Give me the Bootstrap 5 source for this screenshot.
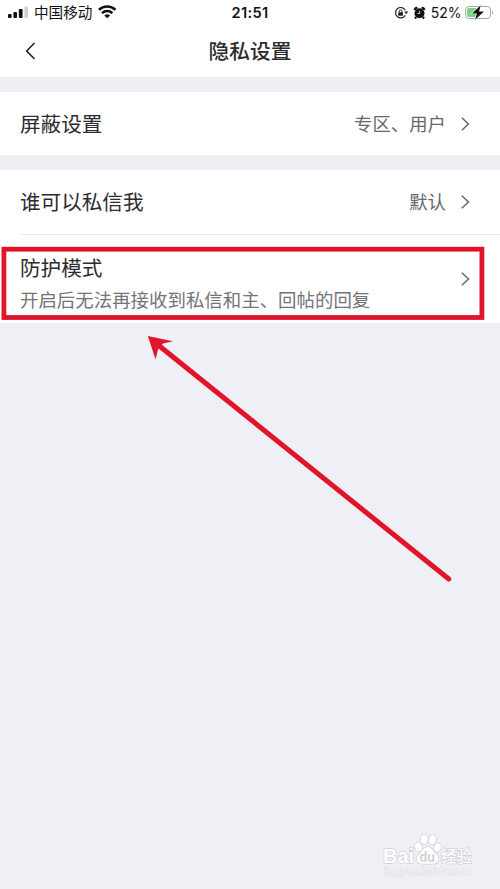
<!DOCTYPE html>
<html lang="zh-CN">
<head>
<meta charset="utf-8">
<meta name="viewport" content="width=device-width, initial-scale=1">
<title>隐私设置</title>
<link href="https://cdn.jsdelivr.net/npm/bootstrap@5.3.0/dist/css/bootstrap.min.css" rel="stylesheet">
<style>
body{font-family:"Liberation Sans","Noto Sans CJK SC",sans-serif;background:#eff0f5;color:#2c2b2f;height:889px;overflow:hidden}
svg{display:block;flex-shrink:0}
.status-strip{height:26px;color:#111}
.carrier{font-size:14.6px;line-height:27px}
.clock{font-family:Inter,"Liberation Sans",sans-serif;font-size:14.6px;font-weight:600;line-height:26px;left:200px;width:100px;letter-spacing:.3px}
.battery-text{font-family:Inter,"Liberation Sans",sans-serif;font-size:14px;line-height:26px}
.title-strip{height:51px}
.page-title{font-size:20.7px;font-weight:500;line-height:52px}
.gap-band{height:15px;background:#efeef3}
.cell{padding-left:20px;padding-right:30px}
.cell-a{height:63px}
.cell-b{height:64px}
.cell-c{height:88px}
.cell-label{font-size:20.6px;line-height:28px;padding-top:2px}
.cell-value{font-size:18.4px;line-height:28px;padding-top:2px;color:#68676b}
.rule{height:1px;margin-left:20px;background:#eaeaec}
.note-stack{padding-top:8px;gap:5px}
.cell-note{font-size:18.45px;line-height:26px;color:#747377}
.overlay{left:0;top:0;pointer-events:none}
</style>
<script src="https://cdn.jsdelivr.net/npm/bootstrap@5.3.0/dist/js/bootstrap.bundle.min.js"></script>
</head>
<body class="position-relative">
<header class="bg-white">
  <div class="status-strip position-relative d-flex align-items-center justify-content-between">
    <div class="d-flex align-items-center">
      <svg width="34" height="26" viewBox="0 0 34 26"><g fill="#111"><rect x="8" y="14" width="3.6" height="4" rx="1"/><rect x="13.4" y="12" width="3.6" height="6" rx="1"/><rect x="18.8" y="9" width="3.8" height="9" rx="1"/></g><rect x="24.4" y="6.5" width="3.6" height="11.5" rx="1" fill="#d2d2d4"/></svg>
      <span class="carrier">中国移动</span>
      <svg width="32" height="26" viewBox="92 0 32 26"><g fill="none" stroke="#111" stroke-width="2.5"><path d="M98.9 9.8a12 12 0 0 1 16.6 0"/><path d="M102 13.1a7.6 7.6 0 0 1 10.4 0"/></g><path d="M104.3 15.5a4.5 4.5 0 0 1 5.8 0l-2.9 2.8z" fill="#111"/></svg>
    </div>
    <span class="clock position-absolute text-center">21:51</span>
    <div class="d-flex align-items-center">
      <svg width="37" height="26" viewBox="393.5 0 37 26"><path d="M404.8 10.2a5.200 5.200 0 1 0 0 5" fill="none" stroke="#222" stroke-width="1.2"/><path d="M403.7 11.4h4l-2 2.8z" fill="#222"/><rect x="397.700" y="12.2" width="4.800" height="3.500" rx=".6" fill="#222"/><path d="M398.700 12.5v-1.200a1.400 1.400 0 0 1 2.800 0v1.200" fill="none" stroke="#222"/><circle cx="419" cy="13.3" r="5" fill="#111"/><path d="M414.300 10.200a2 2 0 0 1 2.500-2.200M423.700 10.200a2 2 0 0 0-2.500-2.200M415.6 17l-1.1 1.500M422.4 17l1.1 1.500" fill="none" stroke="#111" stroke-width="2.200"/><path d="M419.2 10.8v2.700h-2.300" fill="none" stroke="#fff" stroke-width=".8"/></svg>
      <span class="battery-text">52%</span>
      <svg width="38.5" height="26" viewBox="461.5 0 38.5 26"><rect x="465" y="6.500" width="25" height="12" rx="3.400" fill="#fff" stroke="#a5a5a7"/><path d="M468.500 8h10v9h-10a2 2 0 0 1-2-2v-5a2 2 0 0 1 2-2z" fill="#78d37e"/><path d="M491.700 10.400q2.200 2.100 0 4.200z" fill="#a5a5a7"/><path d="M480.300 5.300l-8.800 8.200h5l-2 6.300 9-8.400h-5z" fill="#111" stroke="#fff" stroke-width="1.200" paint-order="stroke"/></svg>
    </div>
  </div>
  <div class="title-strip position-relative text-center">
    <svg class="position-absolute overlay" width="50" height="51" viewBox="0 26 50 51"><path d="M34.500 43l-7.800 8 7.800 8" fill="none" stroke="#222" stroke-width="1.600"/></svg>
    <h1 class="page-title m-0">隐私设置</h1>
  </div>
</header>
<div class="gap-band"></div>
<main>
  <section class="bg-white">
    <div class="cell cell-a d-flex align-items-center justify-content-between">
      <span class="cell-label">屏蔽设置</span>
      <div class="d-flex align-items-center"><span class="cell-value">专区、用户</span><svg width="24" height="18" viewBox="0 0 24 18"><path d="M15.800 2.800l6.700 6.200-6.700 6.200" fill="none" stroke="#68676b" stroke-width="1.500"/></svg></div>
    </div>
  </section>
  <div class="gap-band"></div>
  <section class="bg-white">
    <div class="cell cell-b d-flex align-items-center justify-content-between">
      <span class="cell-label">谁可以私信我</span>
      <div class="d-flex align-items-center"><span class="cell-value">默认</span><svg width="24" height="18" viewBox="0 0 24 18"><path d="M15.800 2.800l6.700 6.200-6.700 6.200" fill="none" stroke="#68676b" stroke-width="1.500"/></svg></div>
    </div>
    <div class="rule"></div>
    <div class="cell cell-c d-flex align-items-center justify-content-between">
      <div class="note-stack d-flex flex-column">
        <span class="cell-label">防护模式</span>
        <span class="cell-note text-nowrap">开启后无法再接收到私信和主、回帖的回复</span>
      </div>
      <svg width="24" height="18" viewBox="0 0 24 18"><path d="M15.800 2.800l6.700 6.200-6.700 6.200" fill="none" stroke="#68676b" stroke-width="1.500"/></svg>
    </div>
  </section>
</main>
<svg class="position-absolute overlay" width="500" height="889" viewBox="0 0 500 889">
  <rect x="3.9" y="249.200" width="478" height="68.300" fill="none" stroke="#e0142b" stroke-width="4.800"/>
  <path d="M160 346.500L448.800 579" stroke="#e0142b" stroke-width="5" stroke-linecap="round"/>
  <path d="M147.800 336L173 341.200L163 343.500L158 349.500L155.600 359.500Z" fill="#e0142b"/>
  <g font-family="Liberation Sans, Noto Sans CJK SC, sans-serif" fill="#fff" stroke="#d0d1d7" stroke-width="1.500" paint-order="stroke">
    <text x="383" y="863" font-size="20" font-weight="700" textLength="31" lengthAdjust="spacingAndGlyphs">Bai</text>
    <ellipse cx="418.500" cy="847" rx="3.500" ry="4.500" transform="rotate(-20 418.500 847)"/>
    <ellipse cx="424.200" cy="839.500" rx="3.500" ry="4.700"/>
    <ellipse cx="432.500" cy="839.700" rx="3.500" ry="4.700" transform="rotate(8 432.500 839.700)"/>
    <ellipse cx="437.500" cy="847.500" rx="3.300" ry="4.300" transform="rotate(22 437.500 847.500)"/>
    <path d="M427.500 847c4 0 5.500 4 8.500 7 4 4 3 9.500-2.500 9.700-3 .1-9 .1-12 0-5.500-.2-6.500-5.700-2.500-9.700 3-3 4.500-7 8.500-7z"/>
    <text x="419.500" y="862" font-size="14" font-weight="700" fill="#d0d1d7" stroke="none" textLength="15.500" lengthAdjust="spacingAndGlyphs">du</text>
    <text x="441" y="862" font-size="15.500" font-weight="500" textLength="31" font-family="Noto Sans CJK SC, sans-serif">经验</text>
    <text x="384" y="875" font-size="10.500" fill="#f8f8fb" stroke="#d9dae0" stroke-width="1" textLength="88" lengthAdjust="spacingAndGlyphs">jingyan.baidu.com</text>
  </g>
</svg>
</body>
</html>
